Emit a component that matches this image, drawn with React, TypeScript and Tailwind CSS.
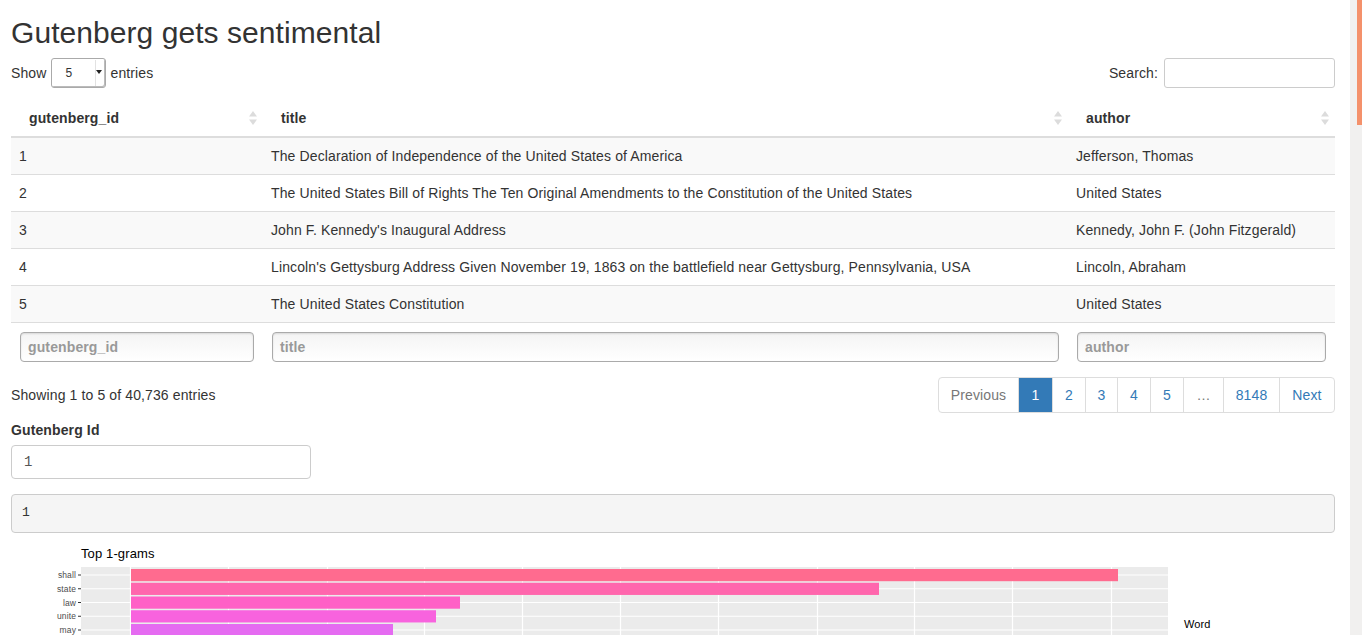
import React from "react";

const rows = [
  { id: "1", title: "The Declaration of Independence of the United States of America", author: "Jefferson, Thomas" },
  { id: "2", title: "The United States Bill of Rights The Ten Original Amendments to the Constitution of the United States", author: "United States" },
  { id: "3", title: "John F. Kennedy's Inaugural Address", author: "Kennedy, John F. (John Fitzgerald)" },
  { id: "4", title: "Lincoln's Gettysburg Address Given November 19, 1863 on the battlefield near Gettysburg, Pennsylvania, USA", author: "Lincoln, Abraham" },
  { id: "5", title: "The United States Constitution", author: "United States" },
];

const pages = [
  { label: "Previous", w: "w-[79px]", muted: true },
  { label: "1", w: "w-[34px]", active: true },
  { label: "2", w: "w-[33px]" },
  { label: "3", w: "w-[32px]" },
  { label: "4", w: "w-[33px]" },
  { label: "5", w: "w-[33px]" },
  { label: "…", w: "w-[40px]", muted: true },
  { label: "8148", w: "w-[56px]" },
  { label: "Next", w: "w-[55px]" },
];

// ggplot bars: word, right edge (page x), fill
const bars = [
  { word: "shall", end: 1118, fill: "#FF6B8F" },
  { word: "state", end: 879, fill: "#FF66AD" },
  { word: "law", end: 460, fill: "#FF60C6" },
  { word: "unite", end: 436, fill: "#F863DE" },
  { word: "may", end: 393, fill: "#E56BF1" },
];
const vLines = [130, 228, 327, 424, 522, 620, 718, 817, 914, 1012, 1111];

const SortIcon = () => (
  <svg width="8" height="14" viewBox="0 0 8 14" className="absolute right-[6px] top-1/2 -translate-y-1/2">
    <path d="M4 0 L8 5.5 L0 5.5 Z" fill="#dcdcdc" />
    <path d="M4 14 L8 8.5 L0 8.5 Z" fill="#dcdcdc" />
  </svg>
);

const Chart = () => {
  const ox = 11;
  const oy = 540;
  return (
    <svg width="1324" height="95" className="block">
      <text x={81 - ox} y={558 - oy} fontSize="13" fill="#000" fontFamily="Liberation Sans, Arial, sans-serif">
        Top 1-grams
      </text>
      <rect x={81 - ox} y={567 - oy} width={1168 - 81} height={100} fill="#ebebeb" />
      {vLines.map((x) => (
        <line key={x} x1={x - ox + 0.5} x2={x - ox + 0.5} y1={567 - oy} y2={200} stroke="#fff" strokeWidth="1.2" />
      ))}
      {bars.map((b, i) => {
        const cy = 575 + i * 13.75 - oy;
        return (
          <g key={b.word}>
            <line x1={81 - ox} x2={1168 - ox} y1={cy} y2={cy} stroke="#fff" strokeWidth="1.2" />
            <rect x={131 - ox} y={cy - 6} width={b.end - 131} height={12.2} fill={b.fill} />
            <line x1={78 - ox} x2={81 - ox} y1={cy} y2={cy} stroke="#333" strokeWidth="1" />
            <text x={76 - ox} y={cy + 3} fontSize="8.5" fill="#4d4d4d" textAnchor="end" fontFamily="Liberation Sans, Arial, sans-serif">
              {b.word}
            </text>
          </g>
        );
      })}
      <text x={1184 - ox} y={628 - oy} fontSize="11" fill="#000" fontFamily="Liberation Sans, Arial, sans-serif">
        Word
      </text>
    </svg>
  );
};

export default function App() {
  return (
    <div className="flex h-[635px] w-[1362px] overflow-hidden bg-white font-['Liberation_Sans',Arial,sans-serif] text-[14px] leading-[20px] tracking-[0.12px] text-[#333]">
      <main className="w-[1350px] shrink-0 pl-[11px] pr-[15px]">
        <h2 className="pt-[16px] text-[30px] leading-[33px] font-normal tracking-[0.06px]">Gutenberg gets sentimental</h2>

        {/* length + search */}
        <div className="mt-[9px] flex items-center justify-between">
          <div className="flex items-center gap-[4px]">
            <span>Show</span>
            <div className="relative flex h-[30px] w-[55px] items-center rounded-[3px] border border-[#aaa] bg-white pl-[14px] text-[12px] shadow-[inset_-1px_-1px_0_#bbb]">
              5
              <span className="absolute right-[3px] top-[11px] h-0 w-0 border-x-[3px] border-t-[4px] border-x-transparent border-t-[#222]" />
              <span className="absolute right-[9px] top-[1px] h-[26px] w-px bg-[#e2e2e2]" />
            </div>
            <span className="ml-[1px]">entries</span>
          </div>
          <div className="flex items-center gap-[6px]">
            <span>Search:</span>
            <div className="h-[30px] w-[171px] rounded-[3px] border border-[#ccc]" />
          </div>
        </div>

        {/* table */}
        <table className="mt-[12px] w-[1324px] table-fixed border-collapse">
          <colgroup>
            <col className="w-[252px]" />
            <col className="w-[805px]" />
            <col className="w-[267px]" />
          </colgroup>
          <thead>
            <tr className="border-b-2 border-[#ddd]">
              {["gutenberg_id", "title", "author"].map((h) => (
                <th key={h} className="relative h-[37px] px-[18px] text-left font-bold">
                  {h}
                  <SortIcon />
                </th>
              ))}
            </tr>
          </thead>
          <tbody>
            {rows.map((r, i) => (
              <tr key={r.id} className={`border-b border-[#ddd] ${i % 2 === 0 ? "bg-[#f9f9f9]" : "bg-white"}`}>
                <td className="h-[37px] px-[8px]">{r.id}</td>
                <td className="h-[37px] px-[8px] whitespace-nowrap">{r.title}</td>
                <td className="h-[37px] px-[8px] whitespace-nowrap">{r.author}</td>
              </tr>
            ))}
            <tr>
              {["gutenberg_id", "title", "author"].map((p) => (
                <td key={p} className="px-[9px] pt-[9px] pb-[8px]">
                  <div className="flex h-[30px] items-center rounded-[4px] border border-[#aaa] bg-gradient-to-b from-[#f4f4f4] to-white px-[7px] font-bold text-[#999] shadow-[inset_0_1px_2px_rgba(0,0,0,0.12)]">
                    {p}
                  </div>
                </td>
              ))}
            </tr>
          </tbody>
        </table>

        {/* info + pagination */}
        <div className="mt-[7px] flex items-center justify-between">
          <span className="pt-[1px]">Showing 1 to 5 of 40,736 entries</span>
          <div className="flex h-[36px] overflow-hidden rounded-[4px] border border-[#ddd]">
            {pages.map((p, i) => (
              <div
                key={p.label}
                className={`flex items-center justify-center ${p.w} ${i > 0 ? "border-l border-[#ddd]" : ""} ${
                  p.active ? "border-[#337ab7] bg-[#337ab7] text-white" : p.muted ? "text-[#777]" : "text-[#337ab7]"
                }`}
              >
                {p.label}
              </div>
            ))}
          </div>
        </div>

        {/* numeric input */}
        <div className="mt-[7px] font-bold">Gutenberg Id</div>
        <div className="mt-[5px] flex h-[34px] w-[300px] items-center rounded-[4px] border border-[#ccc] px-[12px] font-['Liberation_Mono',monospace] text-[14px] text-[#555]">
          1
        </div>

        <pre className="mt-[15px] flex h-[39px] items-center rounded-[4px] border border-[#ccc] bg-[#f5f5f5] px-[10px] font-['Liberation_Mono',monospace] text-[13px] text-[#333]">
          1
        </pre>

        <div className="mt-[7px]">
          <Chart />
        </div>
      </main>

      {/* scrollbar */}
      <div className="relative w-[12px] shrink-0 bg-[#f1f0ef]">
        <div className="absolute right-0 top-0 h-[125px] w-[5px] bg-[#f4916b]" />
      </div>
    </div>
  );
}
